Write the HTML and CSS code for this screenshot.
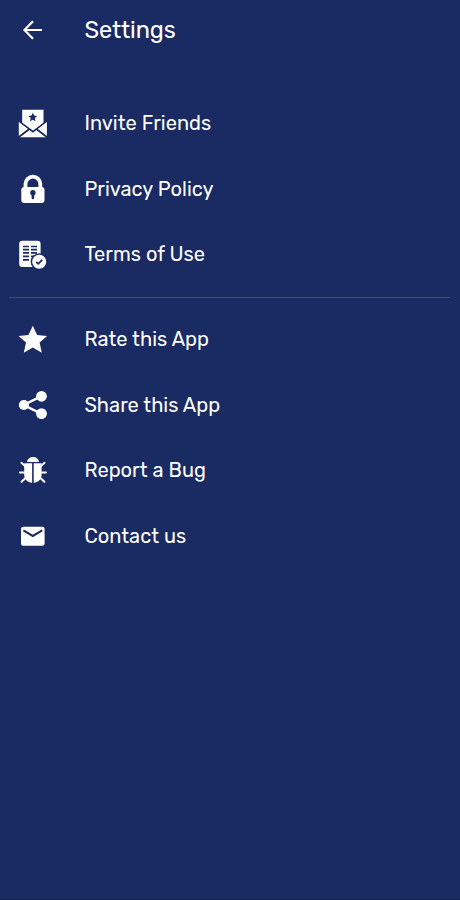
FILE: index.html
```html
<!DOCTYPE html>
<html lang="en">
<head>
<meta charset="utf-8">
<title>Settings</title>
<link rel="stylesheet" href="styles.css">
</head>
<body>
<main class="screen">
  <header class="bar">
    <svg class="icon" viewBox="0 0 46 46"><path class="line" d="M32 23H15M23 14.3L14.5 23l8.5 8.7"/></svg>
    <h1 class="title">Settings</h1>
  </header>
  <nav class="group">
    <a class="row">
      <svg class="icon" viewBox="0 0 46 46"><path d="M12.2 9.8h21.3v13.1L23 31.1 12.2 22.9z"/><path d="M8.8 21.7l9.4 7.1-9.4 7.1zM36.9 21.7l-9.4 7.1 9.4 7.1zM9.7 37.3l9.8-7.4 3.4 2.6 3.4-2.6 9.8 7.4z"/><path class="seam" d="M8.8 20.9L23 31.6 36.9 20.9M8.8 37.2l10.4-8M36.9 37.2l-10.4-8"/><path class="cut" d="M22.8 12.8l1.3 2.8 3.1.4-2.3 2.1.6 3.1-2.7-1.5-2.7 1.5.6-3.1-2.3-2.1 3.1-.4z"/></svg>
      <span class="label">Invite Friends</span>
    </a>
    <a class="row">
      <svg class="icon" viewBox="0 0 46 46"><path class="shackle" d="M15.5 23v-5.2a7.4 7.1 0 0 1 14.8 0V23"/><rect x="11.3" y="21" width="23.2" height="16" rx="3.2"/><circle class="cut" cx="22.9" cy="26.8" r="2.7"/><path class="cut" d="M21.6 27h2.6v5a1.3 1.3 0 0 1-2.6 0z"/></svg>
      <span class="label">Privacy Policy</span>
    </a>
    <a class="row">
      <svg class="icon" viewBox="0 0 46 46"><rect x="9.2" y="8.7" width="21.4" height="26.2" rx="3.2"/><path class="rule" d="M13 14.5h6M21 14.5h6M13 17.6h6M21 17.6h6M13 20.9h6M21 20.9h6M13 24.4h6M21 24.4h6M13 27.9h6"/><circle class="badge" cx="29.2" cy="29.7" r="7.8"/><path class="check" d="M26.2 29.8l2 2 4-4"/></svg>
      <span class="label raised">Terms of Use</span>
    </a>
  </nav>
  <hr class="divider">
  <nav class="group second">
    <a class="row">
      <svg class="icon" viewBox="0 0 46 46"><path d="M22.8 9.8l4.3 9.1 10 1-7.5 6.7 2.2 10.1-9-5.2-9 5.2 2.2-10.1-7.4-6.7 9.9-1z"/></svg>
      <span class="label">Rate this App</span>
    </a>
    <a class="row">
      <svg class="icon" viewBox="0 0 46 46"><path class="link" d="M31.5 14.2L13.7 23l17.8 8.8"/><circle cx="13.9" cy="23" r="5.1"/><circle cx="31.5" cy="14.3" r="5.4"/><circle cx="31.5" cy="31.6" r="5.4"/></svg>
      <span class="label">Share this App</span>
    </a>
    <a class="row">
      <svg class="icon" viewBox="0 0 46 46"><path d="M17.1 13.9a5.9 4.9 0 0 1 11.8 0zM14.2 15.3h7.9v19.5c-4.8-.4-7.9-3.6-7.9-8zM23.7 15.3h7.9v11.5c0 4.4-3.1 7.6-7.9 8z"/><path class="leg" d="M15.5 18.6l-4-3.8M30.5 18.6l4-3.8M15.2 24.5H9.9M30.8 24.5h5.3M15.8 29.8l-4.2 4M30.2 29.8l4.2 4"/></svg>
      <span class="label raised">Report a Bug</span>
    </a>
    <a class="row last">
      <svg class="icon" viewBox="0 0 46 46"><rect x="11" y="14.7" width="23.6" height="19" rx="2.2"/><path class="fold" d="M13.4 18.3l9.4 5.7 9.4-5.7"/></svg>
      <span class="label lowered">Contact us</span>
    </a>
  </nav>
</main>
</body>
</html>
```
FILE: styles.css
```css
* { box-sizing: border-box; }
body { margin: 0; background: #1a2a63; }
.screen {
  height: 900px;
  background: #1a2a63;
  border-bottom: 1px solid #17224e;
  color: #fff;
  font-family: Rubik, Roboto, sans-serif;
}
.bar, .row { display: flex; align-items: center; gap: 28.4px; padding-left: 10px; }
.bar { height: 60px; }
.title { margin: 0; font-size: 23.5px; font-weight: 400; letter-spacing: -.1px; }
.group { display: flex; flex-direction: column; padding-top: 30px; }
.row { height: 66px; }
.row.last { height: 62px; }
.divider { height: 1px; margin: 9px 10px 0 9px; border: 0; background: #414d74; }
.second { padding-top: 8px; }
.icon { width: 46px; height: 46px; flex: none; fill: #fff; }
.label { font-size: 20px; line-height: 24px; letter-spacing: .03px; white-space: nowrap; }
.raised { padding-bottom: 2px; }
.lowered { padding-top: 2px; }
.cut { fill: #1a2a63; }
.line, .shackle, .rule, .check, .link, .leg, .fold, .seam { fill: none; stroke: #fff; }
.line { stroke-width: 2.2; }
.shackle { stroke-width: 3.8; }
.rule { stroke: #1a2a63; stroke-width: 1.6; }
.badge { stroke: #1a2a63; stroke-width: 1.5; }
.check { stroke: #1a2a63; stroke-width: 1.8; }
.link { stroke-width: 2.4; }
.leg { stroke-width: 2; stroke-linecap: round; }
.fold { stroke: #1a2a63; stroke-width: 2.1; }
.seam { stroke: #1a2a63; stroke-width: 1.3; }
```
